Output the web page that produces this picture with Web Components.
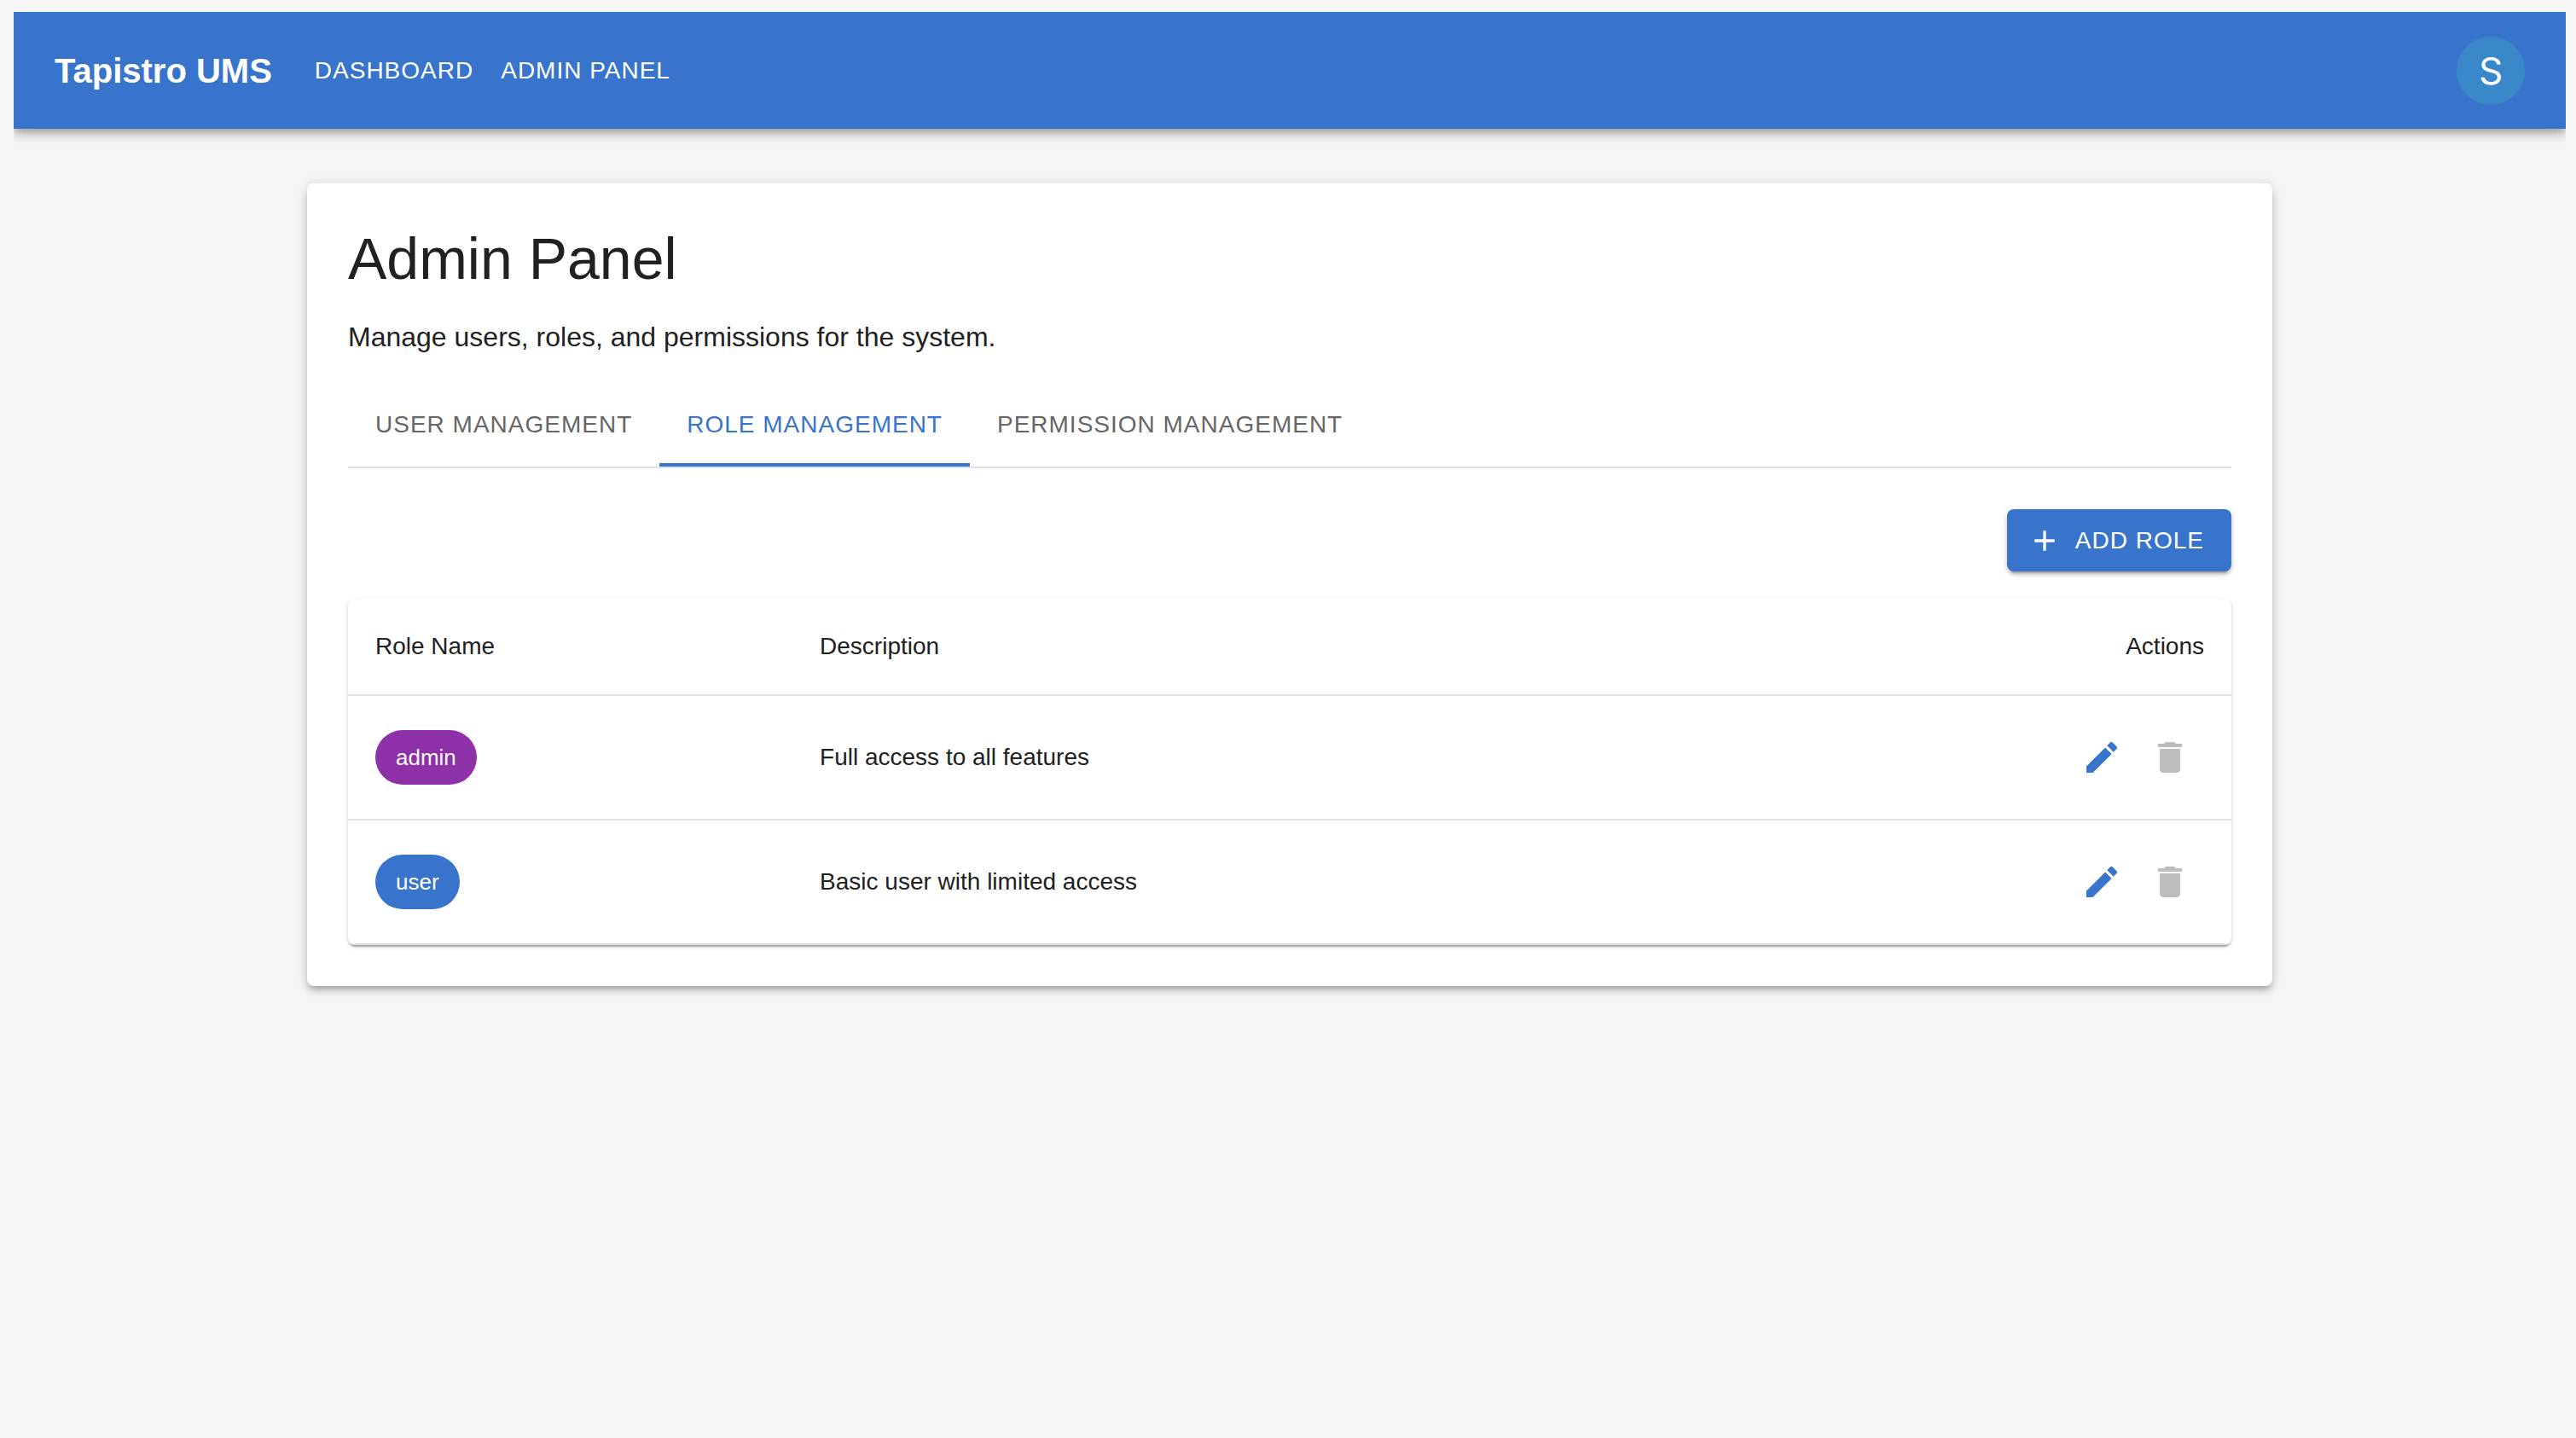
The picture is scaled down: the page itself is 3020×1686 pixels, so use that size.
<!DOCTYPE html>
<html lang="en">
<head>
<meta charset="utf-8">
<title>Tapistro UMS</title>
<style>
  :root {
    --primary: #3874cb;
    --secondary: #8e30a7;
    --info: #3a87ca;
    --ink: #212121;
    --ink-soft: #666666;
    --disabled: #bdbdbd;
    --divider: #e0e0e0;
    --shadow-1: 0 4px 2px -2px rgba(0,0,0,.2), 0 2px 2px 0 rgba(0,0,0,.14), 0 2px 6px 0 rgba(0,0,0,.12);
    --shadow-2: 0 6px 2px -4px rgba(0,0,0,.2), 0 4px 4px 0 rgba(0,0,0,.14), 0 2px 10px 0 rgba(0,0,0,.12);
    --shadow-3: 0 6px 6px -4px rgba(0,0,0,.2), 0 6px 8px 0 rgba(0,0,0,.14), 0 2px 16px 0 rgba(0,0,0,.12);
    --shadow-4: 0 4px 8px -2px rgba(0,0,0,.2), 0 8px 10px 0 rgba(0,0,0,.14), 0 2px 20px 0 rgba(0,0,0,.12);
  }
  body {
    margin: 14px 12px 0 16px;
    background: #f5f5f5;
    color: var(--ink);
    font-family: "Liberation Sans", Helvetica, Arial, sans-serif;
    font-size: 28px;
  }
</style>
</head>
<body>
<ums-app></ums-app>
<script>
class UmsElement extends HTMLElement {
  constructor() {
    super();
    this.attachShadow({ mode: "open" });
  }
  connectedCallback() {
    this.shadowRoot.innerHTML = "<style>*{box-sizing:border-box}" + this.css() + "</style>" + this.html();
  }
}

customElements.define("ums-icon", class extends UmsElement {
  css() {
    return ":host{display:block;width:48px;height:48px}svg{display:block;width:100%;height:100%;fill:currentColor}";
  }
  html() {
    const paths = {
      add: "M19 13h-6v6h-2v-6H5v-2h6V5h2v6h6v2z",
      edit: "M3 17.25V21h3.75L17.81 9.94l-3.75-3.75L3 17.25zM20.71 7.04c.39-.39.39-1.02 0-1.41l-2.34-2.34a.9959.9959 0 0 0-1.41 0l-1.83 1.83 3.75 3.75 1.83-1.83z",
      delete: "M6 19c0 1.1.9 2 2 2h8c1.1 0 2-.9 2-2V7H6v12zM19 4h-3.500l-1-1h-5l-1 1H5v2h14V4z"
    };
    return `<svg viewBox="0 0 24 24" aria-hidden="true"><path d="${paths[this.getAttribute("name")]}"/></svg>`;
  }
});

customElements.define("ums-avatar", class extends UmsElement {
  css() {
    return ":host{display:block}button{display:flex;align-items:center;justify-content:center;width:80px;height:80px;padding:0;border:0;border-radius:50%;background:var(--info);color:#fff;font-family:Inter,sans-serif;font-size:44px;line-height:44px;cursor:pointer}";
  }
  html() { return `<button type="button" aria-label="Account menu"><slot></slot></button>`; }
});

customElements.define("ums-nav-bar", class extends UmsElement {
  css() {
    return `:host{display:block;background:var(--primary);color:#fff;box-shadow:var(--shadow-4)}
    header{display:flex;align-items:center;padding:0 48px}
    .brand{font-size:40px;line-height:64px;font-weight:700;margin-right:34px}
    nav{display:flex;flex:1;padding:32px 0}
    a{color:inherit;text-decoration:none;text-transform:uppercase;font-size:28px;line-height:49px;letter-spacing:1px;padding:12px 16px}`;
  }
  html() {
    return `<header><div class="brand">Tapistro UMS</div>
    <nav><a href="#dashboard">Dashboard</a><a href="#admin">Admin Panel</a></nav>
    <ums-avatar>S</ums-avatar></header>`;
  }
});

customElements.define("ums-tabs", class extends UmsElement {
  css() {
    return `:host{display:block;border-bottom:2px solid var(--divider)}
    div{display:flex}
    button{height:96px;padding:0 32px;border:0;border-bottom:4px solid transparent;background:none;color:var(--ink-soft);font-family:inherit;font-size:28px;line-height:35px;letter-spacing:1px;text-transform:uppercase;cursor:pointer}
    button[aria-selected=true]{color:var(--primary);border-bottom-color:var(--primary)}`;
  }
  html() {
    return `<div role="tablist" aria-label="Admin sections">
    <button type="button" role="tab" aria-selected="false">User Management</button>
    <button type="button" role="tab" aria-selected="true">Role Management</button>
    <button type="button" role="tab" aria-selected="false">Permission Management</button></div>`;
  }
});

customElements.define("ums-button", class extends UmsElement {
  css() {
    return `:host{display:block}
    button{display:flex;align-items:center;gap:16px;padding:12px 32px 12px 24px;border:0;border-radius:8px;background:var(--primary);color:#fff;box-shadow:var(--shadow-2);font-family:inherit;font-size:28px;line-height:49px;letter-spacing:1px;text-transform:uppercase;cursor:pointer}
    ums-icon{width:40px;height:40px}`;
  }
  html() { return `<button type="button"><ums-icon name="${this.getAttribute("icon")}"></ums-icon><slot></slot></button>`; }
});

customElements.define("ums-chip", class extends UmsElement {
  css() {
    return `:host{display:inline-flex;align-items:center;vertical-align:middle;height:64px;padding:0 24px;border-radius:32px;background:var(--primary);color:#fff;font-size:26px;line-height:39px}
    :host([tone=secondary]){background:var(--secondary)}`;
  }
  html() { return "<slot></slot>"; }
});

customElements.define("ums-icon-button", class extends UmsElement {
  css() {
    return `:host{display:block}
    button{display:block;padding:16px;border:0;border-radius:50%;background:none;color:var(--primary);cursor:pointer}
    button:disabled{color:var(--disabled);cursor:default}`;
  }
  html() {
    return `<button type="button" aria-label="${this.getAttribute("label")}"${this.hasAttribute("disabled") ? " disabled" : ""}><ums-icon name="${this.getAttribute("icon")}"></ums-icon></button>`;
  }
});

customElements.define("ums-role-table", class extends UmsElement {
  css() {
    return `:host{display:block;border-radius:8px;background:#fff;box-shadow:var(--shadow-1);overflow:hidden}
    table{width:100%;border-spacing:0;border-collapse:separate;font-size:28px}
    th,td{padding:32px;border-bottom:2px solid var(--divider);text-align:left;vertical-align:middle;font-weight:400;line-height:40px}
    th{line-height:48px}
    .name{width:23.6%}
    th.actions{text-align:right}
    td.actions div{display:flex;justify-content:flex-end}`;
  }
  html() {
    const roles = [
      ["admin", "secondary", "Full access to all features"],
      ["user", "primary", "Basic user with limited access"]
    ];
    return `<table><thead><tr><th class="name" scope="col">Role Name</th><th scope="col">Description</th><th class="actions" scope="col">Actions</th></tr></thead><tbody>` +
      roles.map(([name, tone, text]) => `<tr><td><ums-chip tone="${tone}">${name}</ums-chip></td><td>${text}</td><td class="actions"><div>
        <ums-icon-button icon="edit" label="Edit ${name}"></ums-icon-button>
        <ums-icon-button icon="delete" label="Delete ${name}" disabled></ums-icon-button></div></td></tr>`).join("") +
      "</tbody></table>";
  }
});

customElements.define("ums-card", class extends UmsElement {
  css() {
    return ":host{display:block;padding:48px;border-radius:8px;background:#fff;box-shadow:var(--shadow-3)}";
  }
  html() { return "<slot></slot>"; }
});

customElements.define("ums-app", class extends UmsElement {
  css() {
    return `:host{display:block}
    main{max-width:2400px;margin:64px auto;padding:0 48px}
    h1{margin:0 0 28px;font-size:68px;line-height:80px;font-weight:400}
    p{margin:0 0 32px;font-size:32px;line-height:48px}
    .toolbar{display:flex;justify-content:flex-end;margin:48px 0 32px}`;
  }
  html() {
    return `<ums-nav-bar></ums-nav-bar>
    <main><ums-card>
      <h1>Admin Panel</h1>
      <p>Manage users, roles, and permissions for the system.</p>
      <ums-tabs></ums-tabs>
      <div class="toolbar"><ums-button icon="add">Add Role</ums-button></div>
      <ums-role-table></ums-role-table>
    </ums-card></main>`;
  }
});
</script>
</body>
</html>
